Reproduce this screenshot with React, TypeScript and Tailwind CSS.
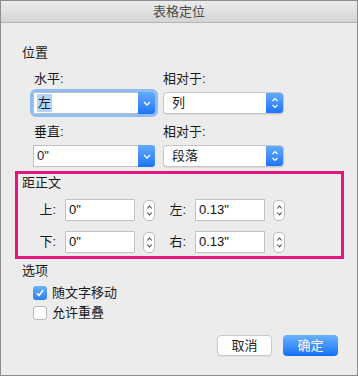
import React from "react";

const FONT = '"Liberation Sans", "Noto Sans CJK SC", sans-serif';

function ChevDown({ color = "#fff" }: { color?: string }) {
  return (
    <svg width="8" height="5" viewBox="0 0 8 5">
      <path d="M1 1 L4 4 L7 1" fill="none" stroke={color} strokeWidth="1.3" />
    </svg>
  );
}

function ChevUpDown({ color = "#fff" }: { color?: string }) {
  return (
    <svg width="8" height="14" viewBox="0 0 8 14">
      <path d="M1.5 5 L4 2.5 L6.5 5" fill="none" stroke={color} strokeWidth="1.2" />
      <path d="M1.5 9 L4 11.5 L6.5 9" fill="none" stroke={color} strokeWidth="1.2" />
    </svg>
  );
}

function Combo({ text, focused }: { text: string; focused?: boolean }) {
  return (
    <div
      className={
        "flex h-[22px] w-[122px] rounded-[3px] " +
        (focused ? "shadow-[0_0_0_3px_#8fbcf2]" : "")
      }
    >
      <div className="flex-1 flex items-center bg-white border border-[#bfbfbf] border-r-0 pl-[3px] text-[13px] leading-[18px] text-[#1a1a1a]">
        {focused ? <span className="bg-[#b3d5fd] px-[1px]">{text}</span> : <span>{text}</span>}
      </div>
      <div className="w-[17px] flex items-center justify-center rounded-r-[3px] bg-gradient-to-b from-[#64a9fb] to-[#1b74f6]">
        <ChevDown />
      </div>
    </div>
  );
}

function Popup({ text }: { text: string }) {
  return (
    <div className="flex h-[22px] w-[121px] rounded-[4px] border border-[#c6c6c6] bg-white shadow-[0_1px_1px_rgba(0,0,0,0.08)] overflow-hidden">
      <div className="flex-1 flex items-center pl-[8px] text-[13px] leading-[18px] text-[#1a1a1a]">{text}</div>
      <div className="w-[17px] flex items-center justify-center bg-gradient-to-b from-[#64a9fb] to-[#1b74f6]">
        <ChevUpDown />
      </div>
    </div>
  );
}

function Stepper() {
  return (
    <div className="w-[12px] h-[21px] rounded-[5px] border border-[#bdbdbd] bg-white flex items-center justify-center">
      <svg width="7" height="15" viewBox="0 0 7 15">
        <path d="M1.3 5.5 L3.5 3 L5.7 5.5" fill="none" stroke="#4a4a4a" strokeWidth="1.1" />
        <path d="M1.3 9.5 L3.5 12 L5.7 9.5" fill="none" stroke="#4a4a4a" strokeWidth="1.1" />
      </svg>
    </div>
  );
}

function Field({ value }: { value: string }) {
  return (
    <div className="w-[70px] h-[22px] bg-white border border-[#c2c2c2] flex items-center pl-[3px] text-[13px] leading-[18px] text-[#111]">
      {value}
    </div>
  );
}

function SpinRow({
  l1,
  v1,
  l2,
  v2,
}: {
  l1: string;
  v1: string;
  l2: string;
  v2: string;
}) {
  return (
    <div className="flex items-center h-[22px]">
      <div className="w-[38px] text-right mr-[9px] text-[13px] leading-[18px]">{l1}</div>
      <Field value={v1} />
      <div className="ml-[8px]">
        <Stepper />
      </div>
      <div className="w-[31px] text-right mr-[9px] text-[13px] leading-[18px]">{l2}</div>
      <Field value={v2} />
      <div className="ml-[8px]">
        <Stepper />
      </div>
    </div>
  );
}

export default function App() {
  return (
    <div
      className="w-[358px] h-[376px] border border-[#8d8d8d] bg-[#ececec] flex flex-col text-[#1a1a1a]"
      style={{ fontFamily: FONT }}
    >
      <div className="h-[22px] border-b border-[#b5b5b5] bg-gradient-to-b from-[#ececec] to-[#d4d4d4] flex items-center justify-center text-[13px] leading-[18px] text-[#4a4a4a]">
        表格定位
      </div>
      <div className="flex flex-col pl-[21px]">
        <div className="mt-[21px] text-[13px] leading-[18px]">位置</div>
        <div className="ml-[11px] grid grid-cols-[122px_121px] gap-x-[8px]">
          <div className="mt-[8px] pl-[1px] text-[13px] leading-[18px]">水平:</div>
          <div className="mt-[8px] text-[13px] leading-[18px]">相对于:</div>
          <div className="mt-[4px]">
            <Combo text="左" focused />
          </div>
          <div className="mt-[4px]">
            <Popup text="列" />
          </div>
          <div className="mt-[9px] pl-[1px] text-[13px] leading-[18px]">垂直:</div>
          <div className="mt-[9px] text-[13px] leading-[18px]">相对于:</div>
          <div className="mt-[4px]">
            <Combo text={'0"'} />
          </div>
          <div className="mt-[4px]">
            <Popup text="段落" />
          </div>
        </div>
        <div className="mt-[4px] -ml-[7px] w-[329px] h-[88px] border-[3px] border-[#e3157f] flex flex-col">
          <div className="pl-[4px] text-[13px] leading-[18px]">距正文</div>
          <div className="mt-[7px]">
            <SpinRow l1="上:" v1={'0"'} l2="左:" v2={'0.13"'} />
          </div>
          <div className="mt-[10px]">
            <SpinRow l1="下:" v1={'0"'} l2="右:" v2={'0.13"'} />
          </div>
        </div>
        <div className="mt-[3px] text-[13px] leading-[18px]">选项</div>
        <div className="mt-[4px] ml-[11px] flex items-center h-[18px]">
          <div className="w-[14px] h-[14px] rounded-[3px] bg-gradient-to-b from-[#6cb0fb] to-[#2a7ff7] flex items-center justify-center">
            <svg width="10" height="10" viewBox="0 0 10 10">
              <path d="M1.8 5.3 L4 7.6 L8.3 2" fill="none" stroke="#fff" strokeWidth="1.6" />
            </svg>
          </div>
          <span className="ml-[5px] text-[13px] leading-[18px]">随文字移动</span>
        </div>
        <div className="mt-[2px] ml-[11px] flex items-center h-[18px]">
          <div className="w-[14px] h-[14px] rounded-[3px] bg-white border border-[#b8b8b8]" />
          <span className="ml-[5px] text-[13px] leading-[18px]">允许重叠</span>
        </div>
        <div className="mt-[13px] flex justify-end pr-[19px] gap-[11px]">
          <div className="w-[55px] h-[21px] rounded-[4px] bg-white border border-[#c8c8c8] shadow-[0_1px_1px_rgba(0,0,0,0.06)] flex items-center justify-center text-[13px] leading-[18px] text-[#222]">
            取消
          </div>
          <div className="w-[55px] h-[21px] rounded-[4px] bg-gradient-to-b from-[#6ab2fb] to-[#0d6ff8] flex items-center justify-center text-[13px] leading-[18px] text-white">
            确定
          </div>
        </div>
      </div>
    </div>
  );
}
